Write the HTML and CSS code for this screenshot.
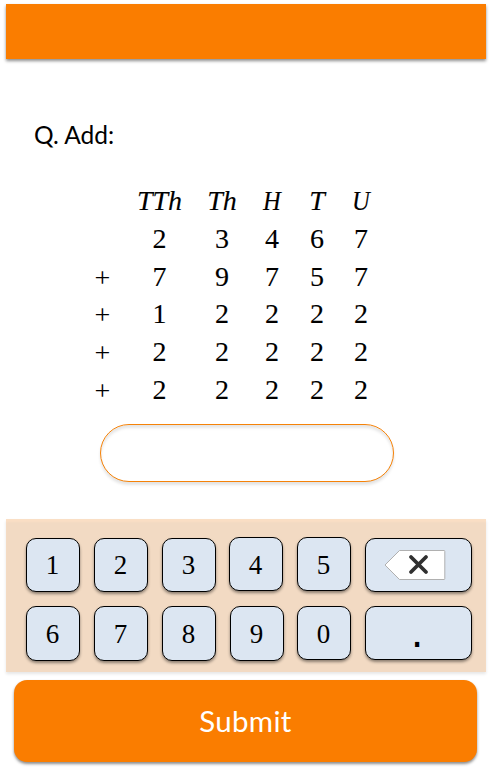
FILE: index.html
```html
<!DOCTYPE html>
<html lang="en">
<head>
<meta charset="utf-8">
<title>Addition</title>
<link rel="stylesheet" href="styles.css">
</head>
<body>
<main class="app">
  <header class="topbar"></header>
  <section class="question">
    <h1 class="prompt">Q. Add:</h1>
    <div class="sum">
      <span></span><i>TTh</i><i>Th</i><i class="narrow">H</i><i>T</i><i class="narrow">U</i>
      <span></span><span>2</span><span>3</span><span>4</span><span>6</span><span>7</span>
      <span class="plus">+</span><span>7</span><span>9</span><span>7</span><span>5</span><span>7</span>
      <span class="plus">+</span><span>1</span><span>2</span><span>2</span><span>2</span><span>2</span>
      <span class="plus">+</span><span>2</span><span>2</span><span>2</span><span>2</span><span>2</span>
      <span class="plus">+</span><span>2</span><span>2</span><span>2</span><span>2</span><span>2</span>
    </div>
    <input class="answer" type="text" aria-label="Answer">
  </section>
  <section class="keypad">
    <div class="row">
      <button class="key">1</button>
      <button class="key">2</button>
      <button class="key">3</button>
      <button class="key raised close">4</button>
      <button class="key raised">5</button>
      <button class="key wide" aria-label="Delete">
        <svg class="erase" width="62" height="32" viewBox="0 0 62 32">
          <path d="M15.5 1.5H60a.8.8 0 0 1 .8.8V29.700a.8.8 0 0 1-.8.8H15.500L1 16z" fill="#fff" stroke="#b0b0b0"/>
          <path d="M27 8L42 23M42 8L27 23" fill="none" stroke="#303030" stroke-width="3.800" stroke-linecap="round"/>
        </svg>
      </button>
    </div>
    <div class="row lower">
      <button class="key">6</button>
      <button class="key">7</button>
      <button class="key">8</button>
      <button class="key">9</button>
      <button class="key short close">0</button>
      <button class="key wide short point">.</button>
    </div>
  </section>
  <button class="submit">Submit</button>
</main>
</body>
</html>
```

FILE: styles.css
```css
* { box-sizing: border-box; }

body {
  margin: 0;
  background: #fff;
  color: #000;
}

.app {
  width: 492px;
  height: 770px;
  padding: 4px 6px 0;
  overflow: hidden;
}

.topbar {
  height: 55px;
  background: #fa7d00;
  box-shadow: 0 2px 3px rgba(0, 0, 0, .45);
}

.question {
  height: 460px;
  padding: 60px 0 0 28px;
}

.prompt {
  margin: 0;
  font: 400 24.5px/32px Lato, "Open Sans", sans-serif;
}

.sum {
  display: grid;
  grid-template-columns: 41px 73px 52px 48px 42px 46px;
  grid-auto-rows: 37.8px;
  margin: 31px 0 0 48px;
  font: 28px/37.8px "Liberation Serif", serif;
  text-align: center;
  -webkit-text-stroke: .12px #000;
}

.narrow { transform: scaleX(.88); }

.plus {
  padding-top: 1px;
  -webkit-text-stroke: 0;
}

.answer {
  display: block;
  width: 294px;
  height: 58px;
  margin: 15.2px 0 0 66px;
  padding: 0 24px;
  border: 1px solid #f58208;
  border-radius: 29px;
  outline: none;
  background: #fff;
  box-shadow: 0 3px 3px rgba(0, 0, 0, .11), inset 0 3px 3px rgba(0, 0, 0, .1);
  font: 28px "Liberation Serif", serif;
}

.keypad {
  height: 153px;
  padding: 19px 14px 0 20px;
  background: #f2dac3;
  box-shadow: 0 2px 3px rgba(0, 0, 0, .1), inset 0 3px 2px #fadfc5;
}

.row {
  display: flex;
  gap: 14px;
}

.lower { margin-top: 14px; }

.key {
  width: 54px;
  height: 54px;
  padding: 0 1px 0 0;
  border: 1px solid #000;
  border-radius: 10px;
  background: #dce6f2;
  color: #000;
  box-shadow: 0 2px 3px rgba(0, 0, 0, .42);
  font: 27px/50px "Liberation Serif", serif;
}

.lower .key { height: 55px; }
.lower .short { height: 54px; }

.raised {
  margin-top: -1px;
  padding-top: 1px;
}

.lower .short { padding-top: 1px; }
.close { margin-left: -1px; }
.wide { width: 107px; }

.erase {
  display: block;
  margin: 0 0 0 18px;
}

.lower .point {
  padding: 0 3px 1px 0;
  font: 40px/46px "DejaVu Sans", sans-serif;
}

.submit {
  display: block;
  width: 463px;
  height: 82px;
  margin: 8px 0 0 8px;
  padding: 0;
  border: 0;
  border-radius: 13px;
  background: #fa7d00;
  color: #fff;
  box-shadow: 0 2px 3px rgba(0, 0, 0, .45);
  font: 400 29.5px/82px Lato, "Open Sans", sans-serif;
  letter-spacing: .3px;
}
```
